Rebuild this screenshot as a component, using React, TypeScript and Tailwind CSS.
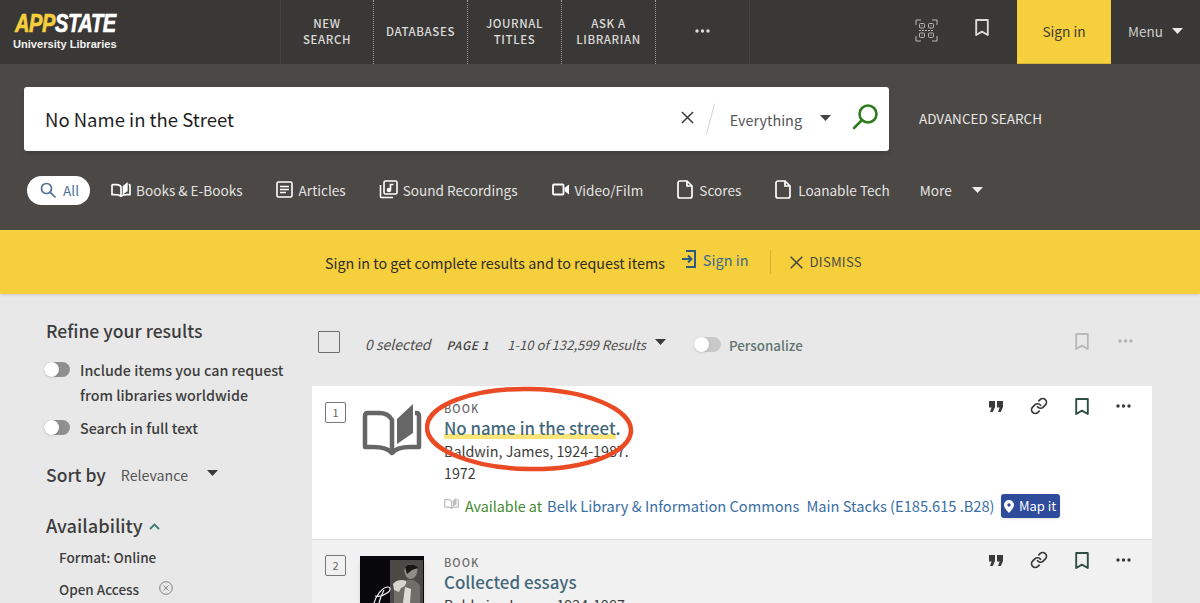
import React from "react";

const FONT = '"Noto Sans CJK SC","Noto Sans",sans-serif';

const Caret = ({ className = "" }: { className?: string }) => (
  <svg width="11" height="6" viewBox="0 0 11 6" className={className}><path d="M0 0h11L5.500 6z" fill="currentColor" /></svg>
);
const Bookmark = ({ color, w = 14, h = 17 }: { color: string; w?: number; h?: number }) => (
  <svg width={w} height={h} viewBox="0 0 14 17" fill="none"><path d="M1.200 1h11.600v15L7 12.600 1.200 16z" stroke={color} strokeWidth="1.900" strokeLinejoin="round" /></svg>
);
const Dots = ({ color }: { color: string }) => (
  <svg width="15" height="4" viewBox="0 0 15 4"><circle cx="2" cy="2" r="1.700" fill={color} /><circle cx="7.500" cy="2" r="1.700" fill={color} /><circle cx="13" cy="2" r="1.700" fill={color} /></svg>
);
const Quote = () => (
  <svg width="14" height="11" viewBox="0 0 14 11" fill="#3a3a3a"><path d="M0 0h6v6l-2.200 5H1l1.600-4.600H0zM8 0h6v6l-2.200 5H9l1.600-4.600H8z" /></svg>
);
const LinkIcon = () => (
  <svg width="18" height="18" viewBox="0 0 24 24" fill="none" stroke="#3a3a3a" strokeWidth="2.300" strokeLinecap="round" strokeLinejoin="round"><path d="M10 13a5 5 0 0 0 7.540.54l3-3a5 5 0 0 0-7.070-7.070l-1.720 1.710" /><path d="M14 11a5 5 0 0 0-7.540-.54l-3 3a5 5 0 0 0 7.070 7.070l1.710-1.710" /></svg>
);
const Actions = () => (
  <div className="flex items-center h-[18px]">
    <span className="w-[14px] flex"><Quote /></span>
    <span className="ml-[27px] w-[18px] flex"><LinkIcon /></span>
    <span className="ml-[27px] w-[14px] flex"><Bookmark color="#2f4f44" /></span>
    <span className="ml-[27px] flex"><Dots color="#3a3a3a" /></span>
  </div>
);
const OpenBook = ({ w = 20, h = 16, color = "#fff" }: { w?: number; h?: number; color?: string }) => (
  <svg width={w} height={h} viewBox="0 0 60 48" fill="none">
    <path d="M30 43c-4-4-12-5-19-5H3V10c0-1 1-2 2-2h12c6 0 11 2 13 7zM30 43c4-4 11-5 18-5h9V10c0-1-1-2-2-2h-2" stroke={color} strokeWidth="5" strokeLinejoin="round" />
    <path d="M35 38V13L50 0v27z" fill={color} />
  </svg>
);
const Doc = ({ color = "#fff" }: { color?: string }) => (
  <svg width="16" height="19" viewBox="0 0 16 19" fill="none"><path d="M1 3a2 2 0 0 1 2-2h7l5 5v10a2 2 0 0 1-2 2H3a2 2 0 0 1-2-2z" stroke={color} strokeWidth="1.700" strokeLinejoin="round" /><path d="M10 1v5h5" stroke={color} strokeWidth="1.700" /></svg>
);
const Articles = () => (
  <svg width="17" height="17" viewBox="0 0 17 17" fill="none" stroke="#fff" strokeWidth="1.600"><rect x="1" y="1" width="15" height="15" rx="1.500" /><path d="M4 5.500h9M4 8.500h9M4 11.500h6" /></svg>
);
const Sound = () => (
  <svg width="19" height="19" viewBox="0 0 19 19" fill="none" stroke="#fff" strokeWidth="1.600"><rect x="5" y="1" width="13" height="13" rx="1.500" /><path d="M1.500 5v11.500a1 1 0 0 0 1 1H14" /><path d="M11.500 10V4.500h3" /><circle cx="10" cy="10" r="1.500" fill="#fff" /></svg>
);
const Video = () => (
  <svg width="17" height="13" viewBox="0 0 17 13" fill="none"><rect x="1" y="1.500" width="10.500" height="10" rx="1" stroke="#fff" strokeWidth="1.800" /><path d="M12.500 5 17 1.500v10L12.500 8z" fill="#fff" /></svg>
);
const Qr = () => (
  <svg width="23" height="23" viewBox="0 0 23 23" fill="none" stroke="#b9b8b6" strokeWidth="1">
    <path d="M1 6V1h5M17 1h5v5M22 17v5h-5M6 22H1v-5" />
    <rect x="4.500" y="4.500" width="5" height="4.500" rx="1" /><rect x="13.500" y="4.500" width="5" height="4.500" rx="1" /><rect x="4.500" y="14" width="5" height="4.500" rx="1" /><rect x="13.500" y="14" width="5" height="4.500" rx="1" />
    <path d="M4 11.500h15" strokeDasharray="2 1" />
    <path d="M6.500 6.700h1M15.500 6.700h1M6.500 16.200h1M15.500 16.200h1" />
  </svg>
);
const Toggle = () => (
  <span className="relative block w-[26px] h-[15px] rounded-full bg-[#8f8f8f] shrink-0">
    <span className="absolute left-0 top-0 w-[15px] h-[15px] rounded-full bg-white shadow-sm" />
  </span>
);
const Search = ({ color, size, sw }: { color: string; size: number; sw: number }) => (
  <svg width={size} height={size} viewBox="0 0 26 26" fill="none" stroke={color} strokeWidth={sw} strokeLinecap="round"><circle cx="16" cy="10" r="8.500" /><path d="M9.500 16.500 2 24" /></svg>
);
const SearchLeft = () => (
  <svg width="16" height="16" viewBox="0 0 16 16" fill="none" stroke="#4f7299" strokeWidth="1.700" strokeLinecap="round"><circle cx="6.500" cy="6.500" r="5" /><path d="m10.300 10.300 4.700 4.700" /></svg>
);

const NAV = "h-full pb-[2px] flex items-center justify-center text-center text-[11.500px] leading-[16px] tracking-[0.6px] font-medium text-[#dcdbd9]";

function Header() {
  return (
    <header className="h-[64px] bg-[#393836] flex items-stretch">
      <div className="w-[280px] pl-[13px] pt-[12px]">
        <div className="block w-fit origin-left scale-x-[0.77] italic font-bold text-[26px] leading-[23px] tracking-[-0.5px] [-webkit-text-stroke:0.7px] [font-family:'Liberation_Sans',sans-serif] ml-[2px] whitespace-nowrap">
          <span className="text-[#f6cf3c]">APP</span><span className="text-white">STATE</span>
        </div>
        <div className="text-[11.100px] leading-[14px] font-bold text-[#f1f1f1] mt-[2px] [font-family:'Liberation_Sans',sans-serif]">University Libraries</div>
      </div>
      <div className={`${NAV} w-[93px] border-l border-[#454442]`}>NEW<br />SEARCH</div>
      <div className={`${NAV} w-[94px] border-l border-dotted border-[#9a9896]`}>DATABASES</div>
      <div className={`${NAV} w-[94px] border-l border-dotted border-[#9a9896]`}>JOURNAL<br />TITLES</div>
      <div className={`${NAV} w-[94px] border-l border-dotted border-[#9a9896]`}>ASK A<br />LIBRARIAN</div>
      <div className={`${NAV} w-[95px] border-l border-r [border-left-style:dotted] border-l-[#9a9896] border-r-[#454442]`}><Dots color="#dcdbd9" /></div>
      <div className="flex-1 flex items-center">
        <span className="ml-[165px] flex -mt-[4px]"><Qr /></span>
        <span className="ml-[37px] flex -mt-[9px]"><Bookmark color="#d9d9d7" /></span>
      </div>
      <div className="w-[94px] bg-[#f6cf3c] border-b border-[#d9b534] flex items-center justify-center text-[13.700px] text-[#3d3b36]">Sign in</div>
      <div className="w-[89px] flex items-center pl-[17px] pb-[2px] text-[13.500px] text-[#cfcecc]">Menu<Caret className="ml-[9px] text-[#e8e8e8]" /></div>
    </header>
  );
}

function SearchBar() {
  const tabs: [React.ReactNode, string, string, string][] = [
    [<OpenBook />, "Books & E-Books", "ml-[21px]", "gap-[5px]"],
    [<Articles />, "Articles", "ml-[33px]", "gap-[6px]"],
    [<Sound />, "Sound Recordings", "ml-[33px]", "gap-[5px]"],
    [<Video />, "Video/Film", "ml-[34px]", "gap-[6px]"],
    [<Doc />, "Scores", "ml-[34px]", "gap-[6px]"],
    [<Doc />, "Loanable Tech", "ml-[34px]", "gap-[7px]"],
  ];
  return (
    <section className="h-[166px] bg-[#4b4846] pl-[24px]">
      <div className="pt-[23px] flex items-center">
        <div className="w-[865px] h-[64px] bg-white rounded-[3px] shadow-md flex items-center">
          <div className="pl-[21px] flex-1 text-[18.500px] leading-[26px] text-[#1f1f1f]">No Name in the Street</div>
          <svg width="13" height="13" viewBox="0 0 14 14" stroke="#3a3a3a" strokeWidth="1.600" className="mr-[16px] -mt-[3px]"><path d="m1 1 12 12M13 1 1 13" /></svg>
          <span className="w-px h-[32px] bg-[#d5d5d5] rotate-[15deg] mr-[19px]" />
          <span className="text-[14.400px] text-[#555] mt-[1px]">Everything</span>
          <Caret className="ml-[18px] mr-[21px] text-[#444] -mt-[3px]" />
          <span className="mr-[11px] flex -mt-[5px]"><Search color="#2f7d1f" size={26} sw={2.6} /></span>
        </div>
        <span className="ml-[30px] text-[13.500px] text-[#e8e7e5] -mt-[1px]">ADVANCED SEARCH</span>
      </div>
      <div className="mt-[24px] flex items-center h-[30px] text-[13.600px] text-[#e4e3e1] whitespace-nowrap">
        <div className="ml-[3px] w-[63px] h-[29px] rounded-full bg-white flex items-center pl-[13px] text-[#4f7299]">
          <SearchLeft /><span className="ml-[7px]">All</span>
        </div>
        {tabs.map(([icon, label, m, g]) => (
          <div key={label} className={`${m} ${g} flex items-center`}>{icon}<span>{label}</span></div>
        ))}
        <span className="ml-[30px]">More</span>
        <Caret className="ml-[20px] text-[#eee]" />
      </div>
    </section>
  );
}

function Banner() {
  return (
    <section className="h-[64px] bg-[#f6cf3c] flex items-center text-[14.300px] text-[#2e2c28] shadow-sm">
      <span className="ml-[325px] mt-[2px]">Sign in to get complete results and to request items</span>
      <svg width="15" height="18" viewBox="0 0 15 18" fill="none" stroke="#2b5a7e" strokeWidth="2" className="ml-[16px] -mt-[6px]"><path d="M5 1h9v16H5M1 9h9M7 5.500 10.500 9 7 12.500" /></svg>
      <span className="ml-[7px] text-[#3a6a8c] text-[14.500px] -mt-[4px]">Sign in</span>
      <span className="ml-[21px] w-px h-[24px] bg-[#d6b32f]" />
      <svg width="13" height="13" viewBox="0 0 13 13" stroke="#444" strokeWidth="1.500" className="ml-[19px]"><path d="m.7.7 11.600 11.600M12.300.7.700 12.300" /></svg>
      <span className="ml-[7px] text-[13.200px] tracking-[0.2px] text-[#4a4a48]">DISMISS</span>
    </section>
  );
}

function Sidebar() {
  return (
    <aside className="w-[312px] shrink-0 pl-[46px] pt-[25px] text-[#3d3d3d]">
      <h2 className="text-[17.600px] leading-[24px] font-medium">Refine your results</h2>
      <div className="mt-[15px] -ml-[2px] flex gap-[10px]">
        <span className="mt-[4px]"><Toggle /></span>
        <p className="text-[14.300px] leading-[25px] font-medium -mt-[1px]">Include items you can request<br />from libraries worldwide</p>
      </div>
      <div className="mt-[8px] -ml-[2px] flex gap-[10px] items-center">
        <Toggle /><span className="text-[14.300px] leading-[25px] font-medium">Search in full text</span>
      </div>
      <div className="mt-[22px] flex items-center">
        <span className="text-[17.500px] leading-[26px] font-medium">Sort by</span>
        <span className="ml-[15px] text-[14.200px] text-[#555] mt-[1px]">Relevance</span>
        <Caret className="ml-[19px] -mt-[5px] text-[#3a3a3a]" />
      </div>
      <div className="mt-[24px] flex items-center">
        <span className="text-[18.200px] leading-[26px] font-medium">Availability</span>
        <svg width="11" height="7" viewBox="0 0 11 7" fill="none" stroke="#3b7d6e" strokeWidth="1.800" className="ml-[6px] mt-[2px]"><path d="m1 6 4.500-4.500L10 6" /></svg>
      </div>
      <div className="mt-[9px] ml-[13px] text-[13.600px] leading-[20px] font-medium">Format: Online</div>
      <div className="mt-[12px] ml-[13px] flex items-center text-[13.500px] leading-[20px] font-medium">
        Open Access
        <svg width="14" height="14" viewBox="0 0 14 14" fill="none" stroke="#777" strokeWidth="0.900" className="ml-[20px] -mt-[2px]"><circle cx="7" cy="7" r="6.300" /><path d="m4.500 4.500 5 5M9.500 4.500l-5 5" /></svg>
      </div>
    </aside>
  );
}

const Num = ({ n }: { n: number }) => (
  <span className="w-[21px] h-[21px] border border-[#777] rounded-[2px] flex items-center justify-center text-[11px] text-[#666] shrink-0">{n}</span>
);

const Cover = () => (
  <svg width="64" height="47" viewBox="0 0 64 47" className="block">
    <rect width="64" height="47" fill="#08080c" />
    <rect x="30" y="4" width="33" height="43" fill="#4a4945" />
    <path d="M34 47V33c0-3 4-5 8-6l4-3h8l6 5v18z" fill="#6f6e6a" />
    <path d="M46 10c4-3 10-2 11 2 1 5-1 10-6 11-3 0-5-2-6-5-1-3-1-6 1-8z" fill="#8d8c87" />
    <path d="M45 11c4-4 11-3 13 1l-6 2-5 4z" fill="#161514" />
    <path d="M33 28c3-4 9-5 13-3 1 3-2 6-5 7l-2 4-5-2z" fill="#d6d5d0" />
    <path d="M45 31l6 2-1 14h-7z" fill="#dedcd6" />
    <path d="M14 47c2-7 8-16 14-16 3 0 3 4-1 6-4 3-8 4-12 3M24 34c-2 4-4 9-5 13" fill="none" stroke="#f4f4f4" strokeWidth="1.200" />
  </svg>
);

function Results() {
  return (
    <main className="w-[840px] shrink-0">
      <div className="h-[92px] flex items-start pt-[39px] text-[#444]">
        <span className="ml-[6px] w-[22px] h-[22px] -mt-[2px] border border-[#6e6e6e] rounded-[1px] shrink-0" />
        <span className="ml-[25px] text-[14px] leading-[24px] italic text-[#4f4f4f] -mt-[1px]">0 selected</span>
        <span className="ml-[16px] text-[11.700px] leading-[24px] italic font-medium tracking-[0.7px] text-[#3f3f3f]">PAGE 1</span>
        <span className="ml-[18px] text-[13.100px] leading-[24px] italic text-[#4f4f4f]">1-10 of 132,599 Results</span>
        <Caret className="ml-[9px] mt-[6px] text-[#3a3a3a]" />
        <span className="ml-[28px] mt-[4px] relative block w-[27px] h-[15px] rounded-full bg-[#c9c9c9]"><span className="absolute left-0 top-0 w-[15px] h-[15px] rounded-full bg-white shadow-sm" /></span>
        <span className="ml-[8px] text-[13.400px] leading-[24px] font-medium text-[#5f7470]">Personalize</span>
        <span className="ml-auto flex items-center mr-[19px] h-[22px] -mt-[3px]">
          <Bookmark color="#b9b9b9" />
          <span className="ml-[29px] flex"><Dots color="#b5b5b5" /></span>
        </span>
      </div>
      <article className="relative h-[154px] bg-white border-b border-[#dcdcdc] flex">
        <div className="ml-[13px] mt-[16px]"><Num n={1} /></div>
        <div className="ml-[16px] mt-[18px]">
          <svg width="60" height="52" viewBox="0 0 60 52" fill="none">
            <path d="M30 49c-4-5-12-6-19-6H3V12c0-2 1-3 3-3h11c7 0 11 3 13 7v33zM30 49c4-5 11-6 18-6h9V12c0-2-1-3-3-3h-1" stroke="#666" strokeWidth="4.500" strokeLinejoin="round" />
            <path d="M35 40V15L51 0v29z" fill="#666" />
          </svg>
        </div>
        <div className="ml-[22px] mt-[15px] flex-1 min-w-0">
          <div className="text-[11px] leading-[14px] tracking-[1px] text-[#6e6e6e] font-medium">BOOK</div>
          <div className="mt-[1px] text-[16.800px] leading-[24px] font-medium text-[#44687a]">
            <span className="bg-[linear-gradient(transparent_75%,#f9e57a_75%,#f9e57a_96%,transparent_96%)]">No name in the street</span>.
          </div>
          <div className="text-[14.300px] leading-[22px] text-[#3c3c3c]">Baldwin, James, 1924-1987.</div>
          <div className="text-[14.300px] leading-[22px] text-[#3c3c3c]">1972</div>
          <div className="mt-[10px] flex items-center text-[14.630px] leading-[24px] whitespace-nowrap">
            <span className="-mt-[6px] flex"><OpenBook w={15} h={13} color="#bdbdbd" /></span>
            <span className="ml-[6px] text-[#3f8a2f] text-[14.300px]">Available at</span>
            <span className="ml-[5px] text-[#3a6ea5]">Belk Library &amp; Information Commons</span>
            <span className="ml-[7px] text-[#3a6ea5]">Main Stacks (E185.615 .B28)</span>
            <span className="ml-[6px] h-[24px] w-[59px] rounded-[3px] bg-[#2f4b9c] shadow-sm flex items-center justify-center text-[13px] text-white">
              <svg width="10" height="13" viewBox="0 0 10 13" className="mr-[5px]"><path fillRule="evenodd" d="M5 0a5 5 0 0 1 5 5c0 3-5 8-5 8S0 8 0 5a5 5 0 0 1 5-5zm0 3.300a1.700 1.700 0 1 0 0 3.400 1.700 1.700 0 0 0 0-3.400z" fill="#fff" /></svg>
              Map it
            </span>
          </div>
        </div>
        <div className="absolute right-[21px] top-[11px]"><Actions /></div>
        <svg width="216" height="86" viewBox="0 0 216 86" fill="none" className="absolute left-[113px] top-[0px]"><ellipse cx="104" cy="43" rx="102" ry="40" transform="rotate(1 104 43)" stroke="#ea4a24" strokeWidth="4.500" /></svg>
      </article>
      <article className="relative h-[70px] bg-[#f1f1f1] flex overflow-hidden">
        <div className="ml-[13px] mt-[15px]"><Num n={2} /></div>
        <div className="ml-[14px] mt-[16px] w-[64px] h-[47px] shrink-0 shadow-md"><Cover /></div>
        <div className="ml-[20px] mt-[15px] flex-1 min-w-0">
          <div className="text-[11px] leading-[14px] tracking-[1px] text-[#6e6e6e] font-medium">BOOK</div>
          <div className="mt-[1px] text-[16.900px] leading-[24px] font-medium text-[#44687a]">Collected essays</div>
          <div className="text-[14.300px] leading-[22px] text-[#3c3c3c]">Baldwin, James, 1924-1987.</div>
        </div>
        <div className="absolute right-[21px] top-[11px]"><Actions /></div>
      </article>
    </main>
  );
}

export default function App() {
  return (
    <div className="w-[1200px] h-[603px] overflow-hidden bg-[#e8e8e8]" style={{ fontFamily: FONT }}>
      <Header />
      <SearchBar />
      <Banner />
      <div className="flex">
        <Sidebar />
        <Results />
      </div>
    </div>
  );
}
